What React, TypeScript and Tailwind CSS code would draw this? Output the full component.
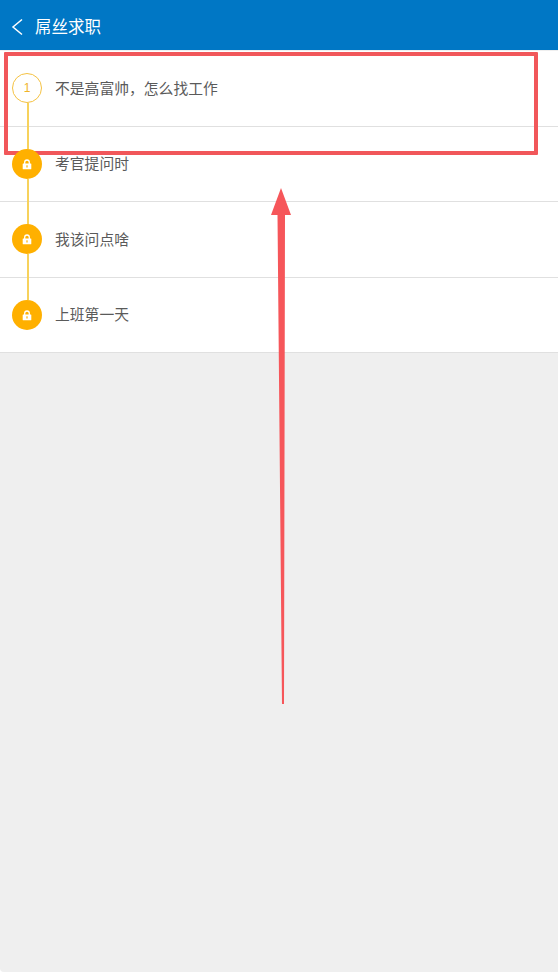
import React from 'react';

const lessons = ['不是高富帅，怎么找工作', '考官提问时', '我该问点啥', '上班第一天'];

const LockIcon = () => (
  <svg className="mt-[1px]" width="10" height="11" viewBox="0 0 10 11" fill="none">
    <path d="M2.7 5V3.3a2.3 2.3 0 0 1 4.6 0V5" stroke="#fff" strokeWidth="1.3" />
    <path d="M1.2 4.6h7.6a.5.5 0 0 1 .5.5v4.6a.6.6 0 0 1-.6.6H1.3a.6.6 0 0 1-.6-.6V5.100a.5.5 0 0 1 .5-.5z" fill="#fff" />
    <rect x="4.400" y="6.300" width="1.200" height="2.200" fill="#ffb000" />
  </svg>
);

export default function App() {
  return (
    <div
      className="relative h-[972px] w-[558px] overflow-hidden rounded-bl-[4px] bg-[#efefef] text-[14.800px]"
      style={{ fontFamily: '"Liberation Sans", "Noto Sans CJK SC", sans-serif' }}
    >
      {/* 顶部导航 */}
      <header className="flex h-[50px] items-center bg-[#0077c5] pl-[10px] pt-[4px] text-white">
        <svg width="14" height="18" viewBox="0 0 14 18" fill="none">
          <path d="M12 1.500 3 9l9 7.500" stroke="#fff" strokeWidth="1.500" />
        </svg>
        <span className="ml-[11px] text-[16.500px]">屌丝求职</span>
      </header>

      {/* 课程列表 */}
      <ul className="mt-[1px] bg-white">
        {lessons.map((title, i) => (
          <li
            key={title}
            className="relative flex h-[75.500px] items-center border-b border-[#e0e0e0] pl-[12px] text-[#5a5a5a]"
          >
            {i === 0 ? (
              <span className="z-10 flex h-[30px] w-[30px] items-center justify-center rounded-full border border-[#f5c242] bg-white text-[12px] text-[#f0b429]">
                1
              </span>
            ) : (
              <span className="z-10 flex h-[30px] w-[30px] items-center justify-center rounded-full bg-[#ffb000]">
                <LockIcon />
              </span>
            )}
            <span className="ml-[13px] pt-[1px]">{title}</span>
            {i < lessons.length - 1 && (
              <span className="absolute left-[27px] top-[52px] h-[46px] w-[2px] bg-[#f7d25c]" />
            )}
          </li>
        ))}
      </ul>

      {/* 红色标注 */}
      <div className="absolute left-[4px] top-[52px] h-[103px] w-[534px] rounded-[1px] border-[4px] border-[#f1575a]" />
      <svg className="absolute left-0 top-0" width="558" height="972" viewBox="0 0 558 972">
        <polygon points="281,188 291,215 285,215 284,704 282,704 277.500,215 271,215" fill="#f6565a" />
      </svg>
    </div>
  );
}
